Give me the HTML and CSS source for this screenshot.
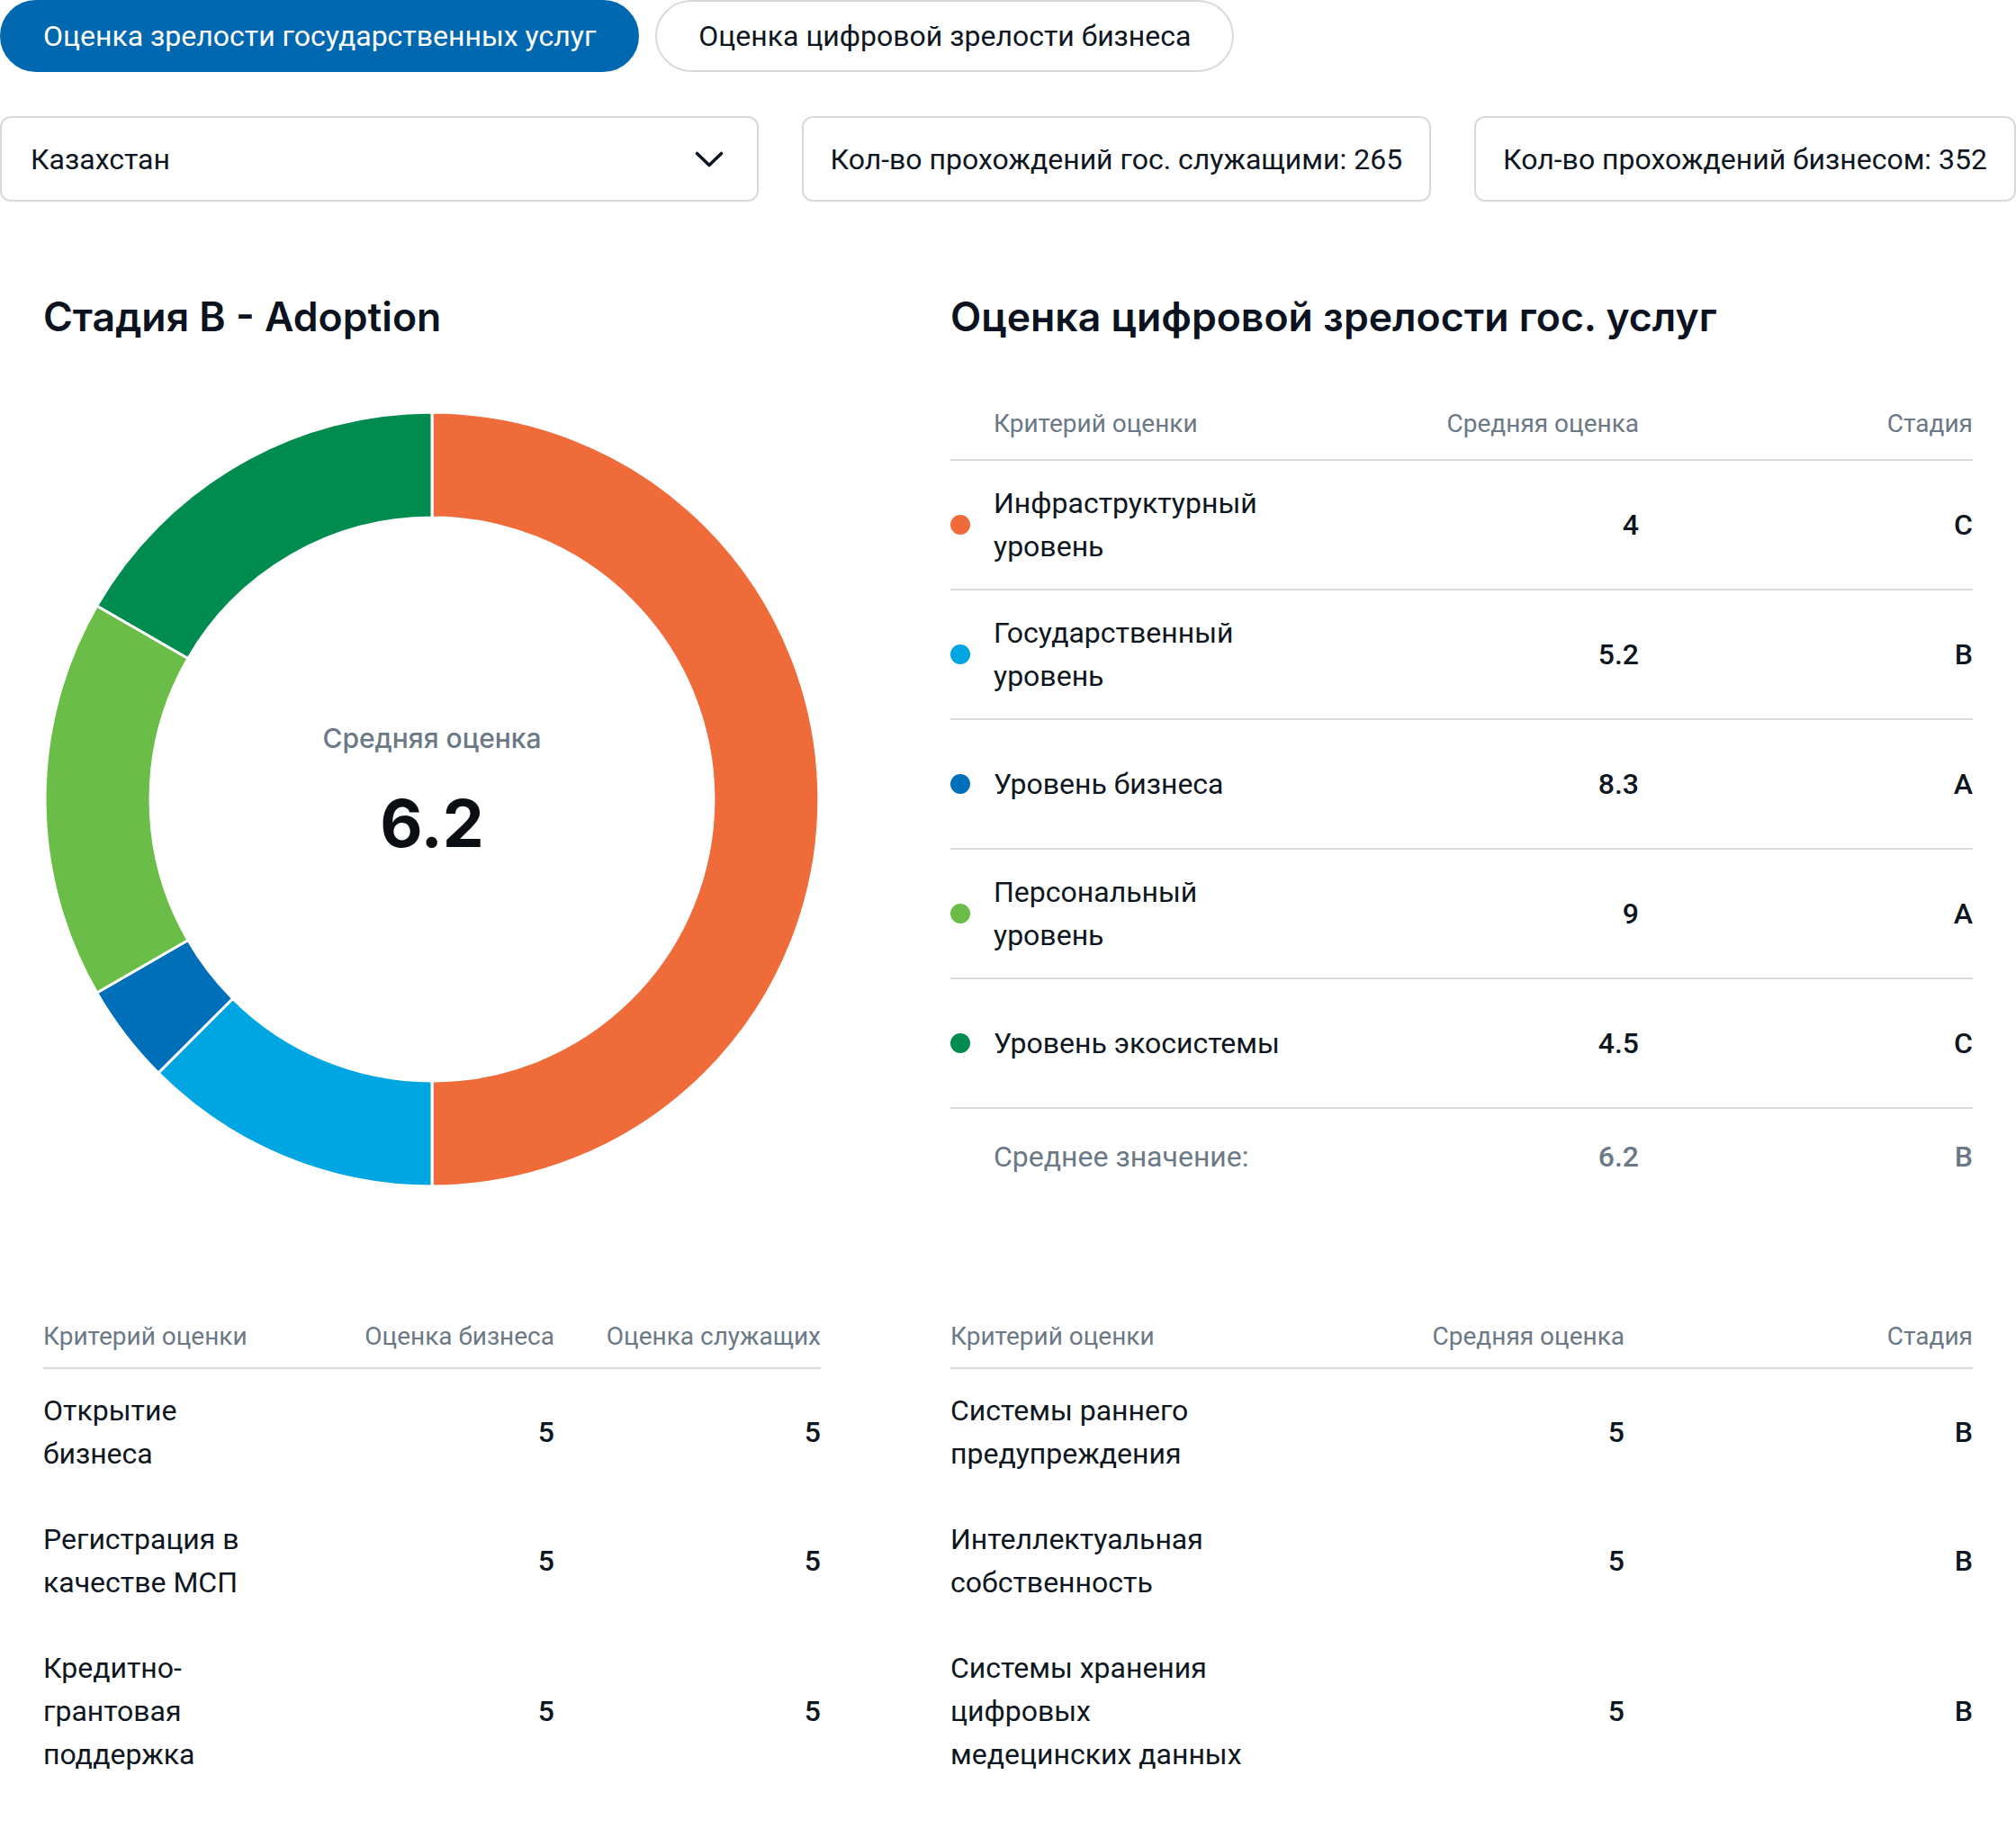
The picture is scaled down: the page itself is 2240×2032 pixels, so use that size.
FILE: index.html
```html
<!DOCTYPE html>
<html lang="ru">
<head>
<meta charset="utf-8">
<title>Оценка зрелости</title>
<link rel="stylesheet" href="styles.css">
</head>
<body>
<div class="page">
  <nav class="tabs">
    <button class="tab tab-active">Оценка зрелости государственных услуг</button>
    <button class="tab">Оценка цифровой зрелости бизнеса</button>
  </nav>

  <div class="filters">
    <div class="select">
      <span>Казахстан</span>
      <svg class="chevron" width="32" height="18" viewBox="0 0 32 18"><path d="M2.5 2.5 L16 15.5 L29.5 2.5" fill="none" stroke="#0e1621" stroke-width="3.6" stroke-linecap="round" stroke-linejoin="round"/></svg>
    </div>
    <div class="stat-card">Кол-во прохождений гос. служащими: 265</div>
    <div class="stat-card">Кол-во прохождений бизнесом: 352</div>
  </div>

  <main class="main">
    <section class="stage">
      <h2 class="title">Стадия B - Adoption</h2>
      <div class="donut">
        <svg width="864" height="864" viewBox="0 0 864 864">
          <g stroke="#fff" stroke-width="3" stroke-linejoin="miter">
            <path fill="#f06b3a" d="M432 2 A430 430 0 0 1 432 862 L432 745 A313 313 0 0 0 432 119 Z"/>
            <path fill="#00a6e1" d="M432 862 A430 430 0 0 1 127.94 736.06 L210.68 653.32 A313 313 0 0 0 432 745 Z"/>
            <path fill="#006fba" d="M127.94 736.06 A430 430 0 0 1 59.61 647 L160.93 588.5 A313 313 0 0 0 210.68 653.32 Z"/>
            <path fill="#6abd46" d="M59.61 647 A430 430 0 0 1 59.61 217 L160.93 275.5 A313 313 0 0 0 160.93 588.5 Z"/>
            <path fill="#008b4f" d="M59.61 217 A430 430 0 0 1 432 2 L432 119 A313 313 0 0 0 160.93 275.5 Z"/>
          </g>
        </svg>
        <div class="donut-center">
          <div class="donut-label">Средняя оценка</div>
          <div class="donut-value">6.2</div>
        </div>
      </div>
    </section>

    <section class="levels">
      <h2 class="title">Оценка цифровой зрелости гос. услуг</h2>
      <div class="table levels-table">
        <div class="row head">
          <span></span><span>Критерий оценки</span><span class="num">Средняя оценка</span><span class="num">Стадия</span>
        </div>
        <div class="row line">
          <span class="dot dot-orange"></span><span>Инфраструктурный уровень</span><span class="num strong">4</span><span class="num strong">C</span>
        </div>
        <div class="row line">
          <span class="dot dot-sky"></span><span>Государственный уровень</span><span class="num strong">5.2</span><span class="num strong">B</span>
        </div>
        <div class="row line">
          <span class="dot dot-blue"></span><span>Уровень бизнеса</span><span class="num strong">8.3</span><span class="num strong">A</span>
        </div>
        <div class="row line">
          <span class="dot dot-lime"></span><span>Персональный уровень</span><span class="num strong">9</span><span class="num strong">A</span>
        </div>
        <div class="row line">
          <span class="dot dot-green"></span><span>Уровень экосистемы</span><span class="num strong">4.5</span><span class="num strong">C</span>
        </div>
        <div class="row total">
          <span></span><span>Среднее значение:</span><span class="num strong">6.2</span><span class="num strong">B</span>
        </div>
      </div>
    </section>

    <section class="services">
      <div class="table services-table">
        <div class="row head">
          <span>Критерий оценки</span><span class="num">Оценка бизнеса</span><span class="num">Оценка служащих</span>
        </div>
        <div class="row item">
          <span>Открытие бизнеса</span><span class="num strong">5</span><span class="num strong">5</span>
        </div>
        <div class="row item">
          <span>Регистрация в качестве МСП</span><span class="num strong">5</span><span class="num strong">5</span>
        </div>
        <div class="row item">
          <span>Кредитно-грантовая поддержка</span><span class="num strong">5</span><span class="num strong">5</span>
        </div>
      </div>
    </section>

    <section class="systems">
      <div class="table systems-table">
        <div class="row head">
          <span>Критерий оценки</span><span class="num">Средняя оценка</span><span class="num">Стадия</span>
        </div>
        <div class="row item">
          <span>Системы раннего предупреждения</span><span class="num strong">5</span><span class="num strong">B</span>
        </div>
        <div class="row item">
          <span>Интеллектуальная собственность</span><span class="num strong">5</span><span class="num strong">B</span>
        </div>
        <div class="row item">
          <span>Системы хранения цифровых медецинских данных</span><span class="num strong">5</span><span class="num strong">B</span>
        </div>
      </div>
    </section>
  </main>
</div>
</body>
</html>
```

FILE: styles.css
```css
* { box-sizing: border-box; }

html, body {
  margin: 0;
  padding: 0;
  background: #ffffff;
}

body {
  font-family: Roboto, "Noto Sans", "Liberation Sans", sans-serif;
  color: #0e1621;
}

.page {
  width: 2240px;
}

/* Tabs */
.tabs {
  display: flex;
  gap: 18px;
}

.tab {
  height: 80px;
  padding: 0 46px;
  border: 2px solid #d6dadf;
  border-radius: 40px;
  background: #ffffff;
  color: #0e1621;
  font-family: Roboto, "Noto Sans", sans-serif;
  font-size: 32px;
  font-weight: 400;
  cursor: pointer;
}

.tab-active {
  background: #0067b1;
  border-color: #0067b1;
  color: #ffffff;
}

/* Filters */
.filters {
  display: flex;
  gap: 48px;
  margin-top: 49px;
  height: 95px;
}

.select {
  flex: 1;
  display: flex;
  align-items: center;
  justify-content: space-between;
  padding: 0 37px 0 32px;
  border: 2px solid #d6dadf;
  border-radius: 12px;
  font-size: 32px;
}

.stat-card {
  flex: none;
  display: flex;
  align-items: center;
  padding: 0 30px;
  border: 2px solid #d6dadf;
  border-radius: 12px;
  font-size: 32px;
}

/* Main grid */
.main {
  display: grid;
  grid-template-columns: 864px 1fr;
  column-gap: 144px;
  padding: 100px 48px 0;
}

.title {
  margin: 0;
  font-family: Inter, "Noto Sans", sans-serif;
  font-size: 44.6px;
  line-height: 56px;
  font-weight: 600;
  color: #0b1320;
}

/* Donut */
.donut {
  position: relative;
  width: 864px;
  height: 864px;
  margin-top: 76px;
}

.donut svg {
  display: block;
}

.donut-center {
  position: absolute;
  inset: 0;
  display: flex;
  flex-direction: column;
  align-items: center;
  justify-content: center;
  padding-bottom: 13px;
  font-family: Inter, "Noto Sans", sans-serif;
}

.donut-label {
  font-size: 30px;
  line-height: 40px;
  font-weight: 500;
  color: #6b7886;
}

.donut-value {
  margin-top: 27px;
  font-size: 73px;
  line-height: 96px;
  font-weight: 700;
  color: #0b0f14;
}

/* Tables */
.table {
  font-size: 32px;
  line-height: 48px;
}

.row {
  display: grid;
  align-items: center;
}

.row.head {
  height: 80px;
  border-bottom: 2px solid #d9dbde;
  color: #6b7886;
  font-size: 28px;
}

.num {
  text-align: right;
}

.strong {
  font-weight: 500;
}

.levels-table {
  margin-top: 52px;
}

.levels-table .row {
  grid-template-columns: 48px 340px 1fr 371px;
}

.levels-table .row.line {
  height: 144px;
  border-bottom: 2px solid #d9dbde;
}

.levels-table .row.total {
  height: 106px;
  color: #6b7886;
}

.dot {
  width: 22px;
  height: 22px;
  border-radius: 50%;
}

.dot-orange { background: #f06b3a; }
.dot-sky { background: #00a6e1; }
.dot-blue { background: #006fba; }
.dot-lime { background: #6abd46; }
.dot-green { background: #008b4f; }

.services,
.systems {
  margin-top: 103px;
}

.services .row.head,
.systems .row.head {
  align-items: end;
  padding-bottom: 10px;
}

.services-table .row {
  grid-template-columns: 240px 1fr 296px;
}

.systems-table .row {
  grid-template-columns: 340px 1fr 387px;
}

.row.item {
  padding: 22px 0 25px;
}
```
